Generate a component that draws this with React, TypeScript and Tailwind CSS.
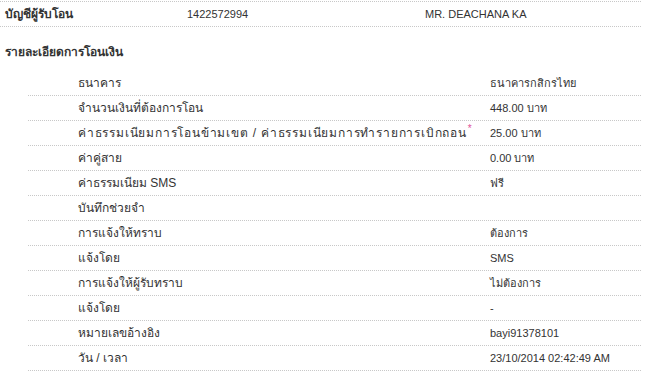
const details: { label: string; value: string; note?: boolean }[] = [
  { label: "ธนาคาร", value: "ธนาคารกสิกรไทย" },
  { label: "จำนวนเงินที่ต้องการโอน", value: "448.00 บาท" },
  {
    label: "ค่าธรรมเนียมการโอนข้ามเขต / ค่าธรรมเนียมการทำรายการเบิกถอน",
    value: "25.00 บาท",
    note: true,
  },
  { label: "ค่าคู่สาย", value: "0.00 บาท" },
  { label: "ค่าธรรมเนียม SMS", value: "ฟรี" },
  { label: "บันทึกช่วยจำ", value: "" },
  { label: "การแจ้งให้ทราบ", value: "ต้องการ" },
  { label: "แจ้งโดย", value: "SMS" },
  { label: "การแจ้งให้ผู้รับทราบ", value: "ไม่ต้องการ" },
  { label: "แจ้งโดย", value: "-" },
  { label: "หมายเลขอ้างอิง", value: "bayi91378101" },
  { label: "วัน / เวลา", value: "23/10/2014 02:42:49 AM" },
];

export default function App() {
  return (
    <div className="w-[652px] h-[388px] bg-white pt-px text-[11px] leading-[14px] text-[#333] font-['Tahoma','Liberation_Sans',sans-serif] overflow-hidden">
      <div className="w-[641px] h-[26px] flex items-center border-y border-dotted border-[#c8c8c8]">
        <div className="w-[187px] pl-[5px] font-bold text-[12px]">บัญชีผู้รับโอน</div>
        <div className="w-[238px]">1422572994</div>
        <div>MR. DEACHANA KA</div>
      </div>

      <div className="mt-[18px] pl-[5px] font-bold text-[12px] h-[14px]">
        รายละเอียดการโอนเงิน
      </div>

      <div className="mt-[12px] ml-[28px] w-[613px]">
        {details.map((row, i) => (
          <div
            key={i}
            className="h-[25px] flex items-center border-b border-dotted border-[#c8c8c8]"
          >
            <div
              className={
                row.note
                  ? "w-[462px] pl-[50px] whitespace-nowrap text-[12px] tracking-[0.8px]"
                  : "w-[462px] pl-[50px] whitespace-nowrap text-[12px]"
              }
            >
              {row.label}
              {row.note && (
                <sup className="text-[#e0509a] text-[10px] ml-px tracking-normal">*</sup>
              )}
            </div>
            <div className="whitespace-nowrap">{row.value}</div>
          </div>
        ))}
      </div>
    </div>
  );
}
